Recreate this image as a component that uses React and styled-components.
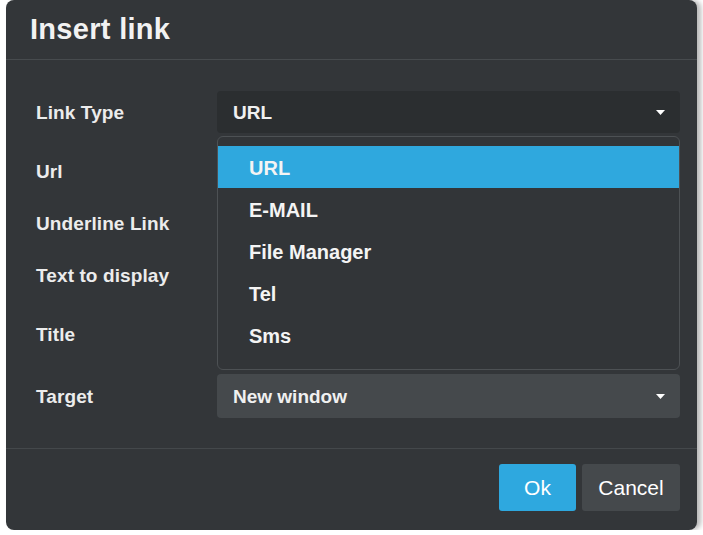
import React from 'react'
import styled, { createGlobalStyle } from 'styled-components'

const GlobalStyle = createGlobalStyle`
  html, body {
    margin: 0;
    padding: 0;
    background: #ffffff;
  }
  * {
    box-sizing: border-box;
  }
  #root {
    padding-left: 6px;
    font-family: "Liberation Sans", Arial, sans-serif;
  }
`

const linkTypes = ['URL', 'E-MAIL', 'File Manager', 'Tel', 'Sms']

const Caret = () => (
  <CaretSvg width="9" height="5" viewBox="0 0 9 5">
    <path d="M0 0 L9 0 L4.5 5 Z" fill="#ffffff" />
  </CaretSvg>
)

const App = () => {
  return (
    <>
      <GlobalStyle />
      <Dialog>
        <Header>
          <Title>Insert link</Title>
        </Header>
        <Body>
          <Row>
            <Label>Link Type</Label>
            <SelectWrap>
              <Select $dark>
                <SelectText>URL</SelectText>
                <Caret />
              </Select>
              <Dropdown>
                {linkTypes.map((t, i) => (
                  <Option key={t} $active={i === 0}>{t}</Option>
                ))}
              </Dropdown>
            </SelectWrap>
          </Row>
          <Row>
            <Label>Url</Label>
            <Input />
          </Row>
          <Row $short>
            <Label>Underline Link</Label>
            <Check />
          </Row>
          <Row>
            <Label>Text to display</Label>
            <Input />
          </Row>
          <Row>
            <Label>Title</Label>
            <Input />
          </Row>
          <Row $tall>
            <Label>Target</Label>
            <Select>
              <SelectText>New window</SelectText>
              <Caret />
            </Select>
          </Row>
        </Body>
        <Footer>
          <Button $primary>Ok</Button>
          <Button>Cancel</Button>
        </Footer>
      </Dialog>
    </>
  )
}

export default App

const Dialog = styled.div`
  width: 691px;
  height: 530px;
  background: #333639;
  border-radius: 8px;
  box-shadow: 4px 0 5px rgba(0, 0, 0, 0.28);
  display: flex;
  flex-direction: column;
  color: #ffffff;
`

const Header = styled.div`
  height: 60px;
  border-bottom: 1px solid #474b4e;
  display: flex;
  align-items: center;
  padding: 0 24px;
`

const Title = styled.h1`
  margin: 0;
  font-size: 29px;
  font-weight: 700;
  color: #f2f2f2;
  letter-spacing: 0.3px;
`

const Body = styled.div`
  padding: 31px 17px 30px 30px;
  display: flex;
  flex-direction: column;
  gap: 17px;
  border-bottom: 1px solid #44484b;
`

const Row = styled.div`
  display: flex;
  align-items: center;
  height: ${p => (p.$short ? '28px' : p.$tall ? '44px' : '42px')};
  margin-top: ${p => (p.$tall ? '2px' : '0')};
`

const Label = styled.div`
  width: 181px;
  flex-shrink: 0;
  font-size: 19px;
  font-weight: 700;
  color: #ececec;
  padding-top: 2px;
  letter-spacing: 0.1px;
`

const SelectWrap = styled.div`
  position: relative;
  flex: 1;
  height: 100%;
`

const Select = styled.div`
  flex: 1;
  height: 100%;
  background: ${p => (p.$dark ? '#2b2e30' : '#45494c')};
  border-radius: 4px;
  display: flex;
  align-items: center;
  justify-content: space-between;
  padding: 0 15px 0 16px;
`

const SelectText = styled.span`
  font-size: 19px;
  font-weight: 700;
  color: #f0f0f0;
  padding-top: 2px;
`

const CaretSvg = styled.svg`
  display: block;
`

const Dropdown = styled.div`
  position: absolute;
  top: 45px;
  left: 0;
  right: 0;
  height: 234px;
  background: #323538;
  border: 1px solid #4d5154;
  border-radius: 6px;
  padding: 9px 0 12px;
  z-index: 2;
`

const Option = styled.div`
  height: 42px;
  display: flex;
  align-items: center;
  padding: 2px 0 0 31px;
  font-size: 20px;
  color: #f4f4f4;
  font-weight: 700;
  background: ${p => (p.$active ? '#2fa8de' : 'transparent')};
`

const Input = styled.div`
  flex: 1;
  height: 100%;
  background: #2b2e30;
  border-radius: 4px;
`

const Check = styled.div`
  width: 24px;
  height: 24px;
  border-radius: 3px;
  background: #2b2e30;
`

const Footer = styled.div`
  flex: 1;
  display: flex;
  justify-content: flex-end;
  align-items: flex-start;
  gap: 6px;
  padding: 15px 17px 0 0;
`

const Button = styled.button`
  height: 47px;
  min-width: ${p => (p.$primary ? '77px' : '98px')};
  border: none;
  border-radius: 3px;
  background: ${p => (p.$primary ? '#2ea8df' : '#45494c')};
  color: #ffffff;
  font-family: "Liberation Sans", Arial, sans-serif;
  font-size: 21px;
  padding: 0 12px;
`
